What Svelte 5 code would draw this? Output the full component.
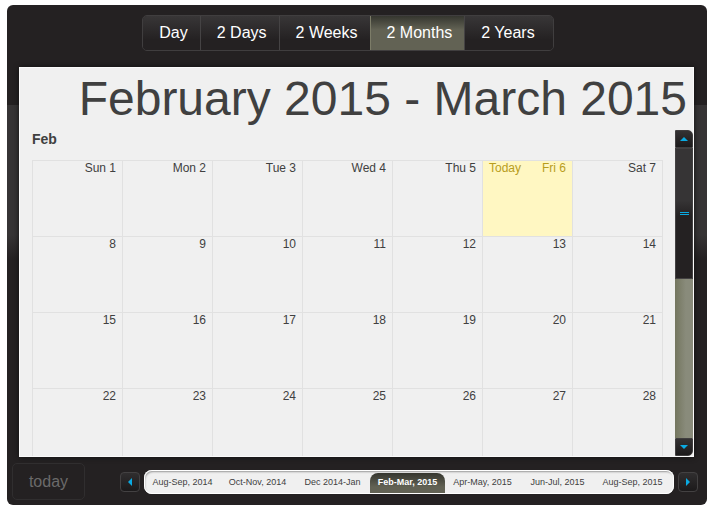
<script lang="ts">
  const views = ['Day', '2 Days', '2 Weeks', '2 Months', '2 Years']
  const dayNames = ['Sun', 'Mon', 'Tue', 'Wed', 'Thu', 'Fri', 'Sat']
  const periods = [
    'Aug-Sep, 2014',
    'Oct-Nov, 2014',
    'Dec 2014-Jan',
    'Feb-Mar, 2015',
    'Apr-May, 2015',
    'Jun-Jul, 2015',
    'Aug-Sep, 2015',
  ]
  const weeks = [0, 1, 2, 3].map((week) => dayNames.map((_, i) => week * 7 + i + 1))
  const today = 6

  let view = $state('2 Months')
  let period = $state('Feb-Mar, 2015')

  function label(day: number) {
    return day <= 7 ? `${dayNames[day - 1]} ${day}` : `${day}`
  }
</script>

<div class="scheduler">
  <header>
    <div class="views">
      {#each views as name}
        <button class:active={view === name} onclick={() => (view = name)}>{name}</button>
      {/each}
    </div>
  </header>

  <main>
    <h1>February 2015 - March 2015</h1>
    <div class="body">
      <section class="month">
        <h2>Feb</h2>
        <table>
          <tbody>
            {#each weeks as week}
              <tr>
                {#each week as day}
                  <td class:today={day === today}>
                    <div class="day">
                      {#if day === today}<span>Today</span>{/if}
                      <span class="date">{label(day)}</span>
                    </div>
                  </td>
                {/each}
              </tr>
            {/each}
          </tbody>
        </table>
      </section>

      <div class="scrollbar">
        <button class="up" aria-label="Scroll up">
          <svg width="8" height="4" viewBox="0 0 8 4"><path d="M4 0L8 4H0z" /></svg>
        </button>
        <div class="track">
          <div class="thumb"><i></i></div>
        </div>
        <button class="down" aria-label="Scroll down">
          <svg width="8" height="4" viewBox="0 0 8 4"><path d="M0 0H8L4 4z" /></svg>
        </button>
      </div>
    </div>
  </main>

  <footer>
    <button class="go-today" disabled>today</button>
    <nav>
      <button class="step" aria-label="Previous">
        <svg width="4" height="8" viewBox="0 0 4 8"><path d="M4 0V8L0 4z" /></svg>
      </button>
      <div class="band">
        {#each periods as name}
          <button class:active={period === name} onclick={() => (period = name)}>{name}</button>
        {/each}
      </div>
      <button class="step" aria-label="Next">
        <svg width="4" height="8" viewBox="0 0 4 8"><path d="M0 0L4 4L0 8z" /></svg>
      </button>
    </nav>
  </footer>
</div>

<style>
  :global(body) {
    background: #fff;
  }

  .scheduler {
    box-sizing: border-box;
    display: flex;
    flex-direction: column;
    height: calc(100vh - 14px);
    margin: 5px 20px 9px 7px;
    border-radius: 6px;
    background: linear-gradient(
      #242122 100px,
      #363435 100px,
      #363435 230px,
      #242122 254px
    );
    color: #404040;
    font-family: 'Liberation Sans', Arial, sans-serif;
  }

  button {
    box-sizing: border-box;
    margin: 0;
    padding: 0;
    border: 0;
    background: none;
    color: inherit;
    font-family: inherit;
  }

  svg {
    display: block;
    fill: #0aaae2;
  }

  header {
    display: flex;
    justify-content: center;
    padding: 10px 18px 16px 0;
  }

  .views {
    display: flex;
    border: 1px solid #403e3f;
    border-radius: 5px;
    overflow: hidden;
  }

  .views button {
    height: 34px;
    padding: 0 12px 0 16px;
    border-left: 1px solid #454344;
    background: linear-gradient(#383637, #242122 70%);
    color: #fff;
    font-size: 16px;
  }

  .views button:first-child {
    border-left: 0;
  }

  .views button:last-child {
    padding-right: 18px;
  }

  .views button.active {
    border-left-color: #7c7c68;
    background: linear-gradient(#35362f, #626254 40%);
  }

  main {
    box-sizing: border-box;
    display: flex;
    flex: 1;
    flex-direction: column;
    min-height: 0;
    margin: 0 13px 0 12px;
    border: 1px solid #fafafa;
    background: #f0f0f0;
    box-shadow: 0 0 5px #111;
  }

  h1 {
    margin: 0;
    padding: 3px 6px;
    font-size: 48px;
    font-weight: normal;
    line-height: 56px;
    text-align: right;
    white-space: nowrap;
  }

  .body {
    display: flex;
    flex: 1;
    min-height: 0;
  }

  .month {
    flex: 1;
    padding: 0 12px;
    overflow: hidden;
  }

  h2 {
    margin: 0 0 12px;
    font-size: 14px;
    line-height: 18px;
  }

  table {
    width: 100%;
    border-collapse: collapse;
    table-layout: fixed;
  }

  td {
    height: 75px;
    padding: 0;
    border: 1px solid #e1e1e1;
    font-size: 12px;
    line-height: 14px;
    vertical-align: top;
  }

  .day {
    display: flex;
    padding: 0 6px;
  }

  .date {
    margin-left: auto;
  }

  td.today {
    background: #fff7c2;
    color: #b89d1c;
  }

  .scrollbar {
    display: flex;
    flex-direction: column;
    width: 18px;
  }

  .scrollbar button {
    display: flex;
    align-items: center;
    justify-content: center;
    height: 18px;
    border: 1px solid #403e3f;
    background: linear-gradient(#343233, #1c1a1b);
  }

  .scrollbar .up {
    border-top-right-radius: 5px;
  }

  .scrollbar .down {
    border-bottom-right-radius: 5px;
  }

  .track {
    flex: 1;
    background: linear-gradient(90deg, #74765f, #898b7b 60%);
  }

  .thumb {
    box-sizing: border-box;
    display: flex;
    align-items: center;
    justify-content: center;
    height: 45%;
    border: 1px solid #434142;
    background: linear-gradient(#363435 40%, #242122 52%);
  }

  .thumb i {
    width: 9px;
    height: 1px;
    border: solid #0aaae2;
    border-width: 1px 0;
  }

  footer {
    display: flex;
    align-items: center;
    gap: 35px;
    padding: 6px 9px 5px 5px;
  }

  .go-today {
    width: 73px;
    height: 37px;
    border: 1px solid #302e2f;
    border-radius: 5px;
    color: #6b6a6a;
    font-size: 16px;
  }

  nav {
    display: flex;
    flex: 1;
    align-items: center;
    gap: 4px;
  }

  .step {
    display: flex;
    align-items: center;
    justify-content: center;
    width: 20px;
    height: 20px;
    border: 1px solid #434142;
    border-radius: 4px;
    background: linear-gradient(#302e2f, #1c1a1b);
  }

  .band {
    box-sizing: border-box;
    display: flex;
    flex: 1;
    height: 24px;
    padding: 3px 4px 1px 1px;
    border-radius: 8px;
    background: #f0f0f0;
    box-shadow: inset 0 0 0 1px #fff, inset 1px 2px 2px #999;
  }

  .band button {
    flex: 1;
    min-width: 0;
    padding: 0 0 2px;
    font-size: 9px;
    text-align: center;
    white-space: nowrap;
  }

  .band button.active {
    border-radius: 8px 8px 0 0;
    background: linear-gradient(#35362f, #626254 70%);
    color: #fff;
    font-weight: bold;
  }
</style>
